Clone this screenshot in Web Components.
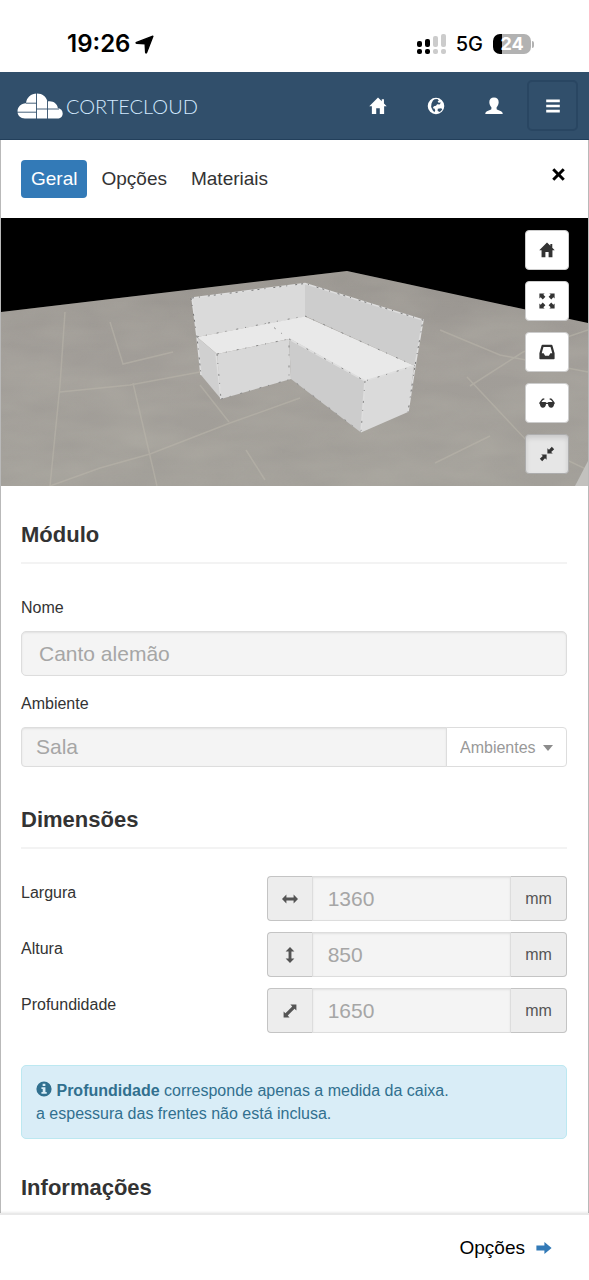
<!DOCTYPE html>
<html lang="pt-BR">
<head>
<meta charset="utf-8">
<meta name="viewport" content="width=device-width, initial-scale=1">
<title>CorteCloud</title>
<style>
  body {
    margin: 0;
    background-color: #fff;
    color: #333;
    font-family: "Liberation Sans", Arial, sans-serif;
    font-size: 16px;
  }
</style>
</head>
<body>
<module-page>
  <phone-status slot="top" time="19:26" network="5G" battery="24"></phone-status>
  <cloud-navbar slot="top"></cloud-navbar>

  <tab-bar></tab-bar>
  <scene-viewer></scene-viewer>

  <form-section heading="Módulo">
    <text-field label="Nome" value="Canto alemão"></text-field>
    <room-field label="Ambiente" value="Sala" options="Ambientes"></room-field>
  </form-section>

  <form-section heading="Dimensões">
    <div class="rows">
      <dimension-field label="Largura" value="1360" icon="horizontal"></dimension-field>
      <dimension-field label="Altura" value="850" icon="vertical"></dimension-field>
      <dimension-field label="Profundidade" value="1650" icon="diagonal"></dimension-field>
    </div>
    <info-alert><b>Profundidade</b> corresponde apenas a medida da caixa.<br>a espessura das frentes não está inclusa.</info-alert>
  </form-section>

  <form-section heading="Informações"></form-section>

  <next-bar slot="bottom" label="Opções"></next-bar>
</module-page>

<script>
// Icon shapes, all on a 20x20 grid.
const icons = {
  home: '<path d="M10 0.5 L0.3 10.3 H3.2 V19 H8 V12.5 H12 V19 H16.8 V10.3 H19.7 L16.6 7.1 V2.6 H14.2 V4.7 Z"/>',
  globe: '<path fill-rule="evenodd" d="M10 0.8a9.2 9.2 0 1 0 0 18.4a9.2 9.2 0 0 0 0-18.4z M8.4 2.6 L11.6 2.3 L13.2 4 L11.8 5 L12.9 6.3 L15.5 6.2 L14 8.4 L11.3 8 L10 9.8 L7.6 10.2 L6.4 12.4 L8.2 12.8 L9.2 14.6 L8.2 17 L6.3 14.8 L4.6 11.2 L5 7.2 L6.6 4 Z M12 13 L15.8 12.6 L17 13.8 L14.3 16.8 L11.8 15.5 Z"/>',
  user: '<path d="M10 0.5C6.700 0.500 4.700 2.700 4.800 5.700C4.900 8 5.800 10 7.100 11.300V13C7.100 13.700 6.700 14.100 6.100 14.300L2.200 15.900C1.100 16.400 0.400 17.300 0.300 19H19.700C19.600 17.300 18.900 16.400 17.800 15.900L13.900 14.300C13.300 14.100 12.900 13.700 12.900 13V11.300C14.200 10 15.100 8 15.200 5.700C15.300 2.700 13.300 0.500 10 0.500Z"/>',
  menu: '<path d="M1.500 2h17v3.200h-17z M1.500 8.400h17v3.200h-17z M1.500 14.800h17v3.200h-17z"/>',
  close: '<path d="M4.400 1.600 L10 7.200 L15.600 1.600 L18.400 4.400 L12.800 10 L18.400 15.600 L15.600 18.400 L10 12.800 L4.400 18.400 L1.600 15.600 L7.200 10 L1.600 4.400 Z"/>',
  fullscreen: '<path d="M0.500 0.500H7L5.400 2.100L8 4.700L4.700 8L2.100 5.400L0.500 7Z M19.500 0.500V7L17.900 5.400L15.300 8L12 4.700L14.600 2.100L13 0.500Z M0.500 19.500V13L2.100 14.600L4.700 12L8 15.300L5.400 17.900L7 19.500Z M19.500 19.500H13L14.600 17.900L12 15.300L15.300 12L17.900 14.600L19.500 13Z"/>',
  inbox: '<path fill-rule="evenodd" d="M4.500 1h11c.7 0 1.100.3 1.300 1l2.700 9.500V18c0 .7-.3 1-1 1h-17c-.7 0-1-.3-1-1v-6.500L3.200 2c.2-.7.6-1 1.300-1z M5.600 3.600 L3.400 11.500 H5.800 L7.600 14.800 H12.400 L14.200 11.500 H16.600 L14.400 3.600 Z"/>',
  glasses: '<path d="M0.500 9.500 L4 4.600 L6.500 4.200 L6.800 5.600 L5 6.200 L3 8.800 H8.200 L9 9.600 H11 L11.800 8.800 H17 L15 6.200 L13.200 5.600 L13.500 4.200 L16 4.600 L19.500 9.500 L19.600 11.200 L18.800 11.600 C18.600 14.600 17.300 15.900 15.300 15.900 C12.900 15.900 11.500 14.200 11.200 11.200 H8.800 C8.500 14.200 7.100 15.900 4.700 15.900 C2.700 15.900 1.400 14.600 1.200 11.600 L0.400 11.200 Z"/>',
  shrink: '<path d="M10.500 9.500V2.800l2 2L16 1 19 4 15.200 7.500l2 2z M9.500 10.500v6.700l-2-2L4 19 1 16 4.800 12.500l-2-2z"/>',
  horizontal: '<path d="M0 10 L5.500 4.500 V8.200 H14.500 V4.500 L20 10 L14.500 15.500 V11.800 H5.500 V15.500 Z"/>',
  vertical: '<path d="M10 0 L15.500 5.500 H11.800 V14.500 H15.500 L10 20 L4.500 14.500 H8.200 V5.500 H4.500 Z"/>',
  diagonal: '<path d="M18 2v7.500l-2.300-2.300-8.500 8.500L9.500 18H2v-7.500l2.300 2.300 8.500-8.500L10.500 2z"/>',
  info: '<path fill-rule="evenodd" d="M10 0.500a9.500 9.500 0 1 0 0 19a9.500 9.500 0 0 0 0-19z M8.300 3.500h3.400v2.900h-3.400z M6.800 7.900h5v5.900h1.600v2.200H6.800v-2.200h1.600v-3.700H6.800z"/>',
  next: '<path d="M0.500 7 H10.500 V2.500 L19.500 10 L10.500 17.500 V13 H0.500 Z"/>',
  location: '<path stroke="currentColor" stroke-width="1.500" stroke-linejoin="round" d="M18.800 1.200L12.200 18.300Q11.500 19.500 11.200 18.200L10.700 9.300L1.800 8.800Q0.500 8.500 1.700 7.800Z"/>'
}

/**
 * Creates an element with an open shadow root holding the given markup.
 */
class ShadowElement extends HTMLElement {
  connectedCallback () {
    if (this.shadowRoot) return
    const template = document.createElement('template')
    template.innerHTML = this.render()
    this.attachShadow({ mode: 'open' }).appendChild(template.content)
  }

  attr (name) {
    return this.getAttribute(name) || ''
  }
}

customElements.define('glyph-icon', class extends ShadowElement {
  render () {
    return `
      <style>
        :host { display: inline-block; width: 16px; height: 16px; }
        svg { display: block; width: 100%; height: 100%; fill: currentColor; }
      </style>
      <svg viewBox="0 0 20 20" aria-hidden="true">${icons[this.attr('name')]}</svg>`
  }
})

customElements.define('module-page', class extends ShadowElement {
  render () {
    return `
      <style>
        :host { display: flex; flex-direction: column; min-height: 100vh; }
        main { flex: 1; border: solid #b9b9b9; border-width: 0 1px; padding-bottom: 13px; }
      </style>
      <slot name="top"></slot>
      <main><slot></slot></main>
      <slot name="bottom"></slot>`
  }
})

customElements.define('phone-status', class extends ShadowElement {
  render () {
    return `
      <style>
        :host {
          display: flex;
          align-items: center;
          height: 56px;
          padding: 16px 55px 0 67px;
          color: #000;
          font-family: Inter, sans-serif;
        }
        time { font-size: 24px; font-weight: 600; line-height: 28px; }
        glyph-icon { width: 19px; height: 19px; margin-left: 5px; }
        .signal { width: 30px; height: 20px; margin-left: auto; }
        .network { margin: 0 10px; font-size: 20px; font-weight: 500; line-height: 24px; }
        .battery {
          width: 38px;
          border-radius: 7px;
          background: linear-gradient(to right, #000 24%, #b2b2b2 24%);
          color: #fff;
          font-size: 18px;
          font-weight: 700;
          line-height: 20px;
          text-align: center;
        }
        .nub { width: 2px; height: 7px; margin-left: 1px; border-radius: 0 2px 2px 0; background-color: #b2b2b2; }
      </style>
      <time>${this.attr('time')}</time>
      <glyph-icon name="location"></glyph-icon>
      <svg class="signal" viewBox="0 0 30 20" aria-hidden="true">
        <g fill="#000">
          <rect x="1" y="7" width="5" height="6" rx="2"/><rect x="9" y="5" width="5" height="8" rx="2"/>
          <rect x="1" y="15" width="5" height="5" rx="2"/><rect x="9" y="15" width="5" height="5" rx="2"/>
        </g>
        <g fill="#ccc">
          <rect x="17" y="2" width="5" height="11" rx="2"/><rect x="25" y="0" width="5" height="13" rx="2"/>
          <rect x="17" y="15" width="5" height="5" rx="2"/><rect x="25" y="15" width="5" height="5" rx="2"/>
        </g>
      </svg>
      <span class="network">${this.attr('network')}</span>
      <span class="battery">${this.attr('battery')}</span>
      <span class="nub"></span>`
  }
})

customElements.define('cloud-navbar', class extends ShadowElement {
  render () {
    return `
      <style>
        :host {
          display: flex;
          align-items: center;
          height: 67px;
          padding: 0 11px 0 17px;
          border-bottom: 1px solid #223f5b;
          background-color: #314f6b;
        }
        .brand {
          display: flex;
          align-items: center;
          gap: 3px;
          margin-right: auto;
          color: #d3eaff;
          font-family: Lato, sans-serif;
          font-size: 20px;
          font-weight: 300;
          line-height: 24px;
          text-decoration: none;
        }
        .brand svg { width: 46px; height: 26px; }
        nav { display: flex; align-items: center; }
        nav a { display: flex; padding: 20px; color: #fff; }
        nav glyph-icon { width: 18px; height: 18px; }
        button {
          display: flex;
          align-items: center;
          justify-content: center;
          width: 51px;
          height: 51px;
          margin-left: 4px;
          padding: 0;
          border: 2px solid #294662;
          border-radius: 5px;
          background: none;
          color: #fff;
        }
        button glyph-icon { width: 16px; height: 16px; }
      </style>
      <a class="brand" href="#">
        <svg viewBox="0 0 46 26" aria-hidden="true">
          <path fill="#fff" d="M8 25.500C3.500 25.500 0.500 22.500 0.500 18.500C0.500 14 3.800 10.500 9 10.300C9.500 4.500 14 0.500 20 0.500C25.500 0.500 29.200 3.600 30.500 8.500C35.800 7.400 40.300 10.500 40.800 15C43.800 15.500 45.700 17.600 45.700 20.400C45.700 23.300 43.500 25.500 40.300 25.500Z"/>
          <path fill="none" stroke="#314f6b" stroke-width="0.900" d="M19.500 0V26 M9 10.200H19.500 M0 19.200H19.500 M19.500 16H42 M30.500 8V26"/>
        </svg>
        <span>CORTECLOUD</span>
      </a>
      <nav>
        <a href="#" aria-label="Início"><glyph-icon name="home"></glyph-icon></a>
        <a href="#" aria-label="Idioma"><glyph-icon name="globe"></glyph-icon></a>
        <a href="#" aria-label="Conta"><glyph-icon name="user"></glyph-icon></a>
        <button type="button" aria-label="Menu"><glyph-icon name="menu"></glyph-icon></button>
      </nav>`
  }
})

customElements.define('tab-bar', class extends ShadowElement {
  render () {
    return `
      <style>
        :host { display: flex; align-items: flex-start; padding: 20px; }
        nav { display: flex; gap: 4px; margin-right: auto; }
        a {
          padding: 7px 10px;
          border-radius: 4px;
          color: #333;
          font-size: 19px;
          line-height: 24px;
          text-decoration: none;
        }
        a.active { background-color: #337ab7; color: #fff; }
        button { display: flex; padding: 7px 2px; border: 0; background: none; color: #000; }
        glyph-icon { width: 15px; height: 15px; }
      </style>
      <nav>
        <a class="active" href="#geral">Geral</a>
        <a href="#opcoes">Opções</a>
        <a href="#materiais">Materiais</a>
      </nav>
      <button type="button" aria-label="Fechar"><glyph-icon name="close"></glyph-icon></button>`
  }
})

customElements.define('scene-viewer', class extends ShadowElement {
  render () {
    return `
      <style>
        :host { display: block; position: relative; background-color: #000; }
        .scene { display: block; width: 100%; height: auto; }
        .tools {
          position: absolute;
          top: 12px;
          right: 19px;
          display: flex;
          flex-direction: column;
          gap: 11px;
        }
        button {
          display: flex;
          align-items: center;
          justify-content: center;
          width: 44px;
          height: 40px;
          padding: 0;
          border: 1px solid #ccc;
          border-radius: 4px;
          background-color: #fff;
          color: #333;
        }
        button.active { border-color: #adadad; background-color: #e6e6e6; box-shadow: inset 0 3px 5px rgba(0, 0, 0, .125); }
      </style>
      <svg class="scene" viewBox="1 218 587 268" role="img" aria-label="Canto alemão">
        <defs>
          <linearGradient id="floor" x1="0" y1="0" x2="0" y2="1">
            <stop offset="0" stop-color="#98948f"/>
            <stop offset="0.400" stop-color="#a19d98"/>
            <stop offset="1" stop-color="#a29f99"/>
          </linearGradient>
          <filter id="stone" x="0" y="0" width="100%" height="100%" color-interpolation-filters="sRGB">
            <feTurbulence type="fractalNoise" baseFrequency="0.012 0.035" numOctaves="3" seed="4"/>
            <feColorMatrix values="0 0 0 0 0.740  0 0 0 0 0.730  0 0 0 0 0.690  0.900 0 0 0 -0.250"/>
          </filter>
          <clipPath id="ground"><path d="M1 312 L347 271 L588 323 V486 H1z"/></clipPath>
        </defs>
        <path fill="#000" d="M1 218h587v268H1z"/>
        <g clip-path="url(#ground)">
          <path fill="url(#floor)" d="M1 270h587v216H1z"/>
          <rect x="1" y="270" width="587" height="216" filter="url(#stone)" opacity="0.600"/>
          <g fill="none" stroke="#b9b5aa" stroke-width="1.500" opacity="0.600">
            <path d="M65 312L60 385L50 486 M133 383L157 486 M50 486L100 468L150 454L230 423L300 398"/>
            <path d="M110 322L123 364L173 352 M60 392L130 385L200 372 M200 385L229 422 M246 450L265 480"/>
            <path d="M467 377L527 441L588 470 M470 386L523 352L588 330 M435 463L490 436 M440 330L500 355L588 372"/>
          </g>
          <path fill="#c2c1be" d="M588 461L575 486H588z"/>
        </g>
        <path fill="#dadada" d="M191.500 298L305 283.500V317L197 337z"/>
        <path fill="#cdcdcd" d="M305 283.500L423.500 320L415 366L305 316z"/>
        <path fill="#e9e9e9" d="M197 337L305 316.500L415 366L365 381L289 339L217 354z"/>
        <path fill="#d0d0d0" d="M197 337L217 354L221 399L201 375z"/>
        <path fill="#d8d8d8" d="M217 354L289 339L291 379L221 399z"/>
        <path fill="#cccccc" d="M289 338L365 381L361 432.500L291 379z"/>
        <path fill="#dadada" d="M365 381L414 365L408 412L361 432.500z"/>
        <g fill="none">
          <path stroke="#dedede" stroke-width="1.500" d="M192 298L305 283.500L423 320L415 366L408 412 M192 298L197 337L201 375 M216 354L221 399 M365 381L361 432 M289 339L365 381L414 366"/>
          <path stroke="#777" stroke-dasharray="2 5 1 8 2 4" d="M192 298L305 283.500L423 320L415 366L408 412 M191 298L197 337L201 375"/>
          <path stroke="#888" stroke-dasharray="2 7 1 10" d="M217 354L221 399 M365 381L361 432 M217 354L289 339V379 M289 339L365 381L414 366 M197 337L268 323L289 339 M268 323L305 316 M305 316L415 366 M221 399L291 379L361 432"/>
        </g>
      </svg>
      <div class="tools">
        <button type="button" aria-label="Vista inicial"><glyph-icon name="home"></glyph-icon></button>
        <button type="button" aria-label="Tela cheia"><glyph-icon name="fullscreen"></glyph-icon></button>
        <button type="button" aria-label="Gavetas"><glyph-icon name="inbox"></glyph-icon></button>
        <button type="button" aria-label="Visualizar"><glyph-icon name="glasses"></glyph-icon></button>
        <button type="button" class="active" aria-label="Reduzir"><glyph-icon name="shrink"></glyph-icon></button>
      </div>`
  }
})

customElements.define('form-section', class extends ShadowElement {
  render () {
    return `
      <style>
        :host { display: block; padding: 37px 21px 0 20px; }
        h2 { margin: 0; font-size: 22px; line-height: 24px; }
        .fields { margin-top: 15px; border-top: 2px solid #f3f3f3; }
        .fields.empty { display: none; }
        ::slotted(.rows) { display: grid; gap: 11px; padding-top: 27px; }
      </style>
      <h2>${this.attr('heading')}</h2>
      <div class="fields ${this.children.length ? '' : 'empty'}"><slot></slot></div>`
  }
})

// Shared look of the disabled boxes.
const inputStyle = `
  label { font-size: 16px; line-height: 22px; }
  input {
    box-sizing: border-box;
    width: 100%;
    min-width: 0;
    margin: 0;
    border: 1px solid #ddd;
    background-color: #f4f4f4;
    box-shadow: inset 0 1px 2px rgba(0, 0, 0, .08);
    color: #a6a6a6;
    font-family: inherit;
    font-size: 21px;
    opacity: 1;
  }`

customElements.define('text-field', class extends ShadowElement {
  render () {
    return `
      <style>
        ${inputStyle}
        :host { display: grid; gap: 12px; padding-top: 33px; }
        input { height: 45px; padding: 0 17px; border-radius: 5px; }
      </style>
      <label for="field">${this.attr('label')}</label>
      <input id="field" type="text" value="${this.attr('value')}" disabled>`
  }
})

customElements.define('room-field', class extends ShadowElement {
  render () {
    return `
      <style>
        ${inputStyle}
        :host { display: grid; gap: 12px; padding: 17px 0 4px; }
        .group { display: flex; height: 40px; }
        input { flex: 1; padding: 0 14px; border-radius: 4px 0 0 4px; }
        .picker { position: relative; display: flex; }
        select {
          appearance: none;
          width: 121px;
          margin-left: -1px;
          padding: 0 13px;
          border: 1px solid #ddd;
          border-radius: 0 4px 4px 0;
          background-color: #fff;
          color: #999;
          font-family: inherit;
          font-size: 16px;
          opacity: 1;
        }
        svg { position: absolute; top: 18px; right: 14px; width: 10px; height: 6px; fill: #8c8c8c; }
      </style>
      <label for="field">${this.attr('label')}</label>
      <div class="group">
        <input id="field" type="text" value="${this.attr('value')}" disabled>
        <div class="picker">
          <select aria-label="${this.attr('options')}" disabled><option>${this.attr('options')}</option></select>
          <svg viewBox="0 0 10 6" aria-hidden="true"><path d="M0 0h10L5 6z"/></svg>
        </div>
      </div>`
  }
})

customElements.define('dimension-field', class extends ShadowElement {
  render () {
    return `
      <style>
        ${inputStyle}
        :host { display: grid; grid-template-columns: 9fr 11fr; }
        label { padding-top: 6px; }
        .group { display: flex; height: 45px; }
        .addon {
          box-sizing: border-box;
          flex: none;
          display: flex;
          align-items: center;
          justify-content: center;
          width: 45px;
          border: 1px solid #c4c4c4;
          border-right: 0;
          border-radius: 4px 0 0 4px;
          background-color: #ededed;
          color: #555;
        }
        .unit { width: 56px; border: 1px solid #c4c4c4; border-left: 0; border-radius: 0 4px 4px 0; }
        input { flex: 1; padding: 0 15px; }
      </style>
      <label for="field">${this.attr('label')}</label>
      <div class="group">
        <span class="addon"><glyph-icon name="${this.attr('icon')}"></glyph-icon></span>
        <input id="field" type="text" value="${this.attr('value')}" disabled>
        <span class="addon unit">mm</span>
      </div>`
  }
})

customElements.define('info-alert', class extends ShadowElement {
  render () {
    return `
      <style>
        :host {
          display: block;
          margin-top: 32px;
          padding: 13px 14px;
          border: 1px solid #bce8f1;
          border-radius: 5px;
          background-color: #d9edf7;
          color: #31708f;
          line-height: 23px;
        }
        glyph-icon { vertical-align: -1px; }
      </style>
      <glyph-icon name="info"></glyph-icon>
      <slot></slot>`
  }
})

customElements.define('next-bar', class extends ShadowElement {
  render () {
    return `
      <style>
        :host {
          display: flex;
          justify-content: flex-end;
          padding: 21px 37px 20px;
          border-top: 2px solid #e9e9e9;
          background-color: #fff;
          box-shadow: 0 -1px 2px rgba(0, 0, 0, .08);
        }
        a {
          display: flex;
          align-items: center;
          gap: 11px;
          color: #000;
          font-size: 19px;
          line-height: 24px;
          text-decoration: none;
        }
        glyph-icon { color: #337ab7; }
      </style>
      <a href="#opcoes">${this.attr('label')} <glyph-icon name="next"></glyph-icon></a>`
  }
})
</script>
</body>
</html>
